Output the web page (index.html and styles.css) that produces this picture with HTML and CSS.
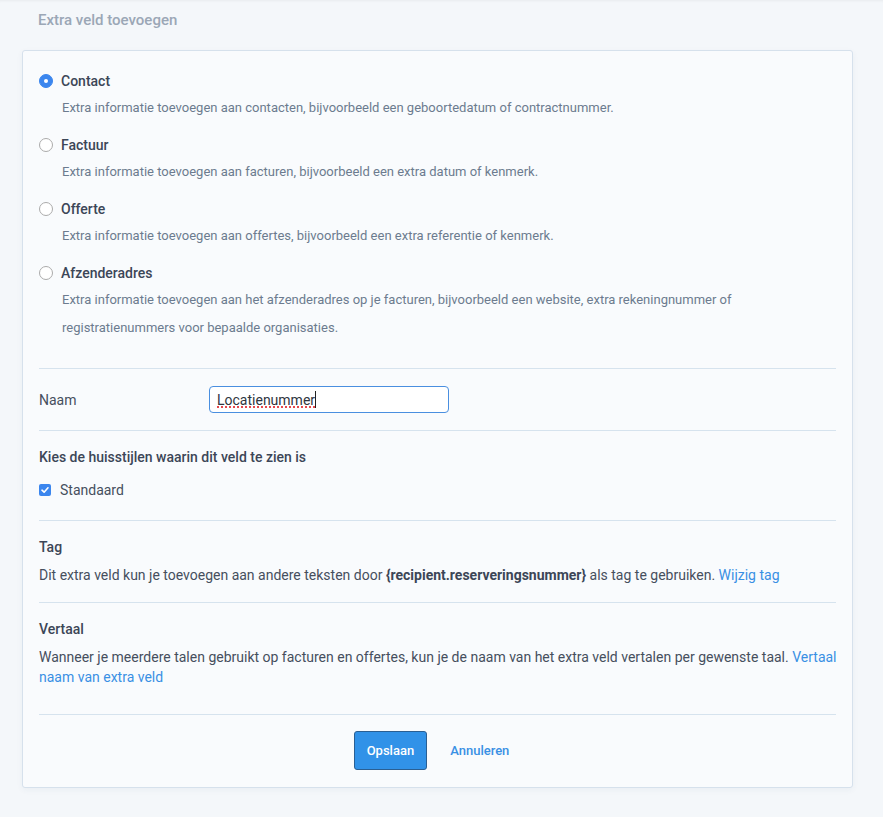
FILE: index.html
```html
<!DOCTYPE html>
<html lang="nl">

<head>
    <meta charset="UTF-8">
    <meta name="viewport" content="width=device-width, initial-scale=1.0">
    <title>Extra veld toevoegen</title>
    <link rel="stylesheet" href="styles.css">
</head>

<body>
    <div id="page">
        <h2 class="page-title">Extra veld toevoegen</h2>

        <div class="card">
            <div class="section types">
                <div class="type">
                    <label class="type-label"><span class="radio checked"></span>Contact</label>
                    <p class="type-desc">Extra informatie toevoegen aan contacten, bijvoorbeeld een geboortedatum of contractnummer.</p>
                </div>
                <div class="type">
                    <label class="type-label"><span class="radio"></span>Factuur</label>
                    <p class="type-desc">Extra informatie toevoegen aan facturen, bijvoorbeeld een extra datum of kenmerk.</p>
                </div>
                <div class="type">
                    <label class="type-label"><span class="radio"></span>Offerte</label>
                    <p class="type-desc">Extra informatie toevoegen aan offertes, bijvoorbeeld een extra referentie of kenmerk.</p>
                </div>
                <div class="type">
                    <label class="type-label"><span class="radio"></span>Afzenderadres</label>
                    <p class="type-desc">Extra informatie toevoegen aan het afzenderadres op je facturen, bijvoorbeeld een website, extra rekeningnummer of registratienummers voor bepaalde organisaties.</p>
                </div>
            </div>

            <div class="section name-row">
                <label class="name-label">Naam</label>
                <div class="text-input"><span class="misspelled">Locatienummer</span><span class="caret"></span></div>
            </div>

            <div class="section styles">
                <h3 class="section-title">Kies de huisstijlen waarin dit veld te zien is</h3>
                <label class="check-row">
                    <span class="checkbox">
                        <svg width="10" height="10" viewBox="0 0 10 10"><path d="M2 5.2 L4.1 7.2 L8 2.8" fill="none" stroke="#fff" stroke-width="1.6" stroke-linecap="round" stroke-linejoin="round"/></svg>
                    </span>
                    Standaard
                </label>
            </div>

            <div class="section tag">
                <h3 class="section-title">Tag</h3>
                <p class="section-text">Dit extra veld kun je toevoegen aan andere teksten door <strong>{recipient.reserveringsnummer}</strong> als tag te gebruiken. <a href="#">Wijzig tag</a></p>
            </div>

            <div class="section translate">
                <h3 class="section-title">Vertaal</h3>
                <p class="section-text">Wanneer je meerdere talen gebruikt op facturen en offertes, kun je de naam van het extra veld vertalen per gewenste taal. <a href="#">Vertaal naam van extra veld</a></p>
            </div>

            <div class="actions">
                <button class="btn-save">Opslaan</button>
                <a href="#" class="btn-cancel">Annuleren</a>
            </div>
        </div>
    </div>
</body>
</html>
```

FILE: styles.css
```css
body {
    margin: 0;
    background-color: #f4f7fa;
    font-family: Roboto, "Liberation Sans", Arial, sans-serif;
    color: #444f5f;
    box-shadow: inset 0 3px 3px -2px rgba(0, 0, 0, 0.05);
    min-height: 817px;
}

#page {
    padding: 0 30px 30px 22px;
}

.page-title {
    margin: 0;
    padding: 10px 16px 0;
    height: 50px;
    box-sizing: border-box;
    font-size: 15px;
    line-height: 20px;
    font-weight: 500;
    color: #9ba7b6;
}

.card {
    background: #f9fbfd;
    border: 1px solid #d6e1ec;
    border-radius: 3px;
    padding: 0 16px;
    box-shadow: 0 2px 6px rgba(40, 70, 110, 0.05);
}

.section {
    border-bottom: 1px solid #d6e3ee;
    padding: 16px 0 17px;
}

.types {
    padding-top: 17px;
    padding-bottom: 26px;
}

.type + .type {
    margin-top: 10px;
}

.type-label {
    display: flex;
    align-items: center;
    font-size: 14px;
    line-height: 26px;
    font-weight: 500;
    color: #3c4657;
}

.radio {
    width: 14px;
    height: 14px;
    box-sizing: border-box;
    border-radius: 50%;
    border: 1px solid #ababab;
    background: #fff;
    margin-right: 8px;
    position: relative;
}

.radio.checked {
    background: #3b86ee;
    border-color: #3b86ee;
}

.radio.checked::after {
    content: "";
    position: absolute;
    left: 4px;
    top: 4px;
    width: 4px;
    height: 4px;
    border-radius: 50%;
    background: #fff;
}

.type-desc {
    margin: 0;
    padding-left: 23px;
    font-size: 13px;
    line-height: 28px;
    color: #6c7b8f;
}

.name-row {
    display: flex;
    align-items: center;
    padding: 17px 0;
}

.name-label {
    width: 170px;
    font-size: 14px;
    color: #464f5d;
}

.text-input {
    width: 240px;
    height: 27px;
    box-sizing: border-box;
    border: 1px solid #4a8fe0;
    border-radius: 4px;
    background: #fff;
    padding: 0 7px;
    display: flex;
    align-items: center;
    font-size: 14px;
    color: #2f3540;
}

.misspelled {
    text-decoration: underline dotted #e5484d;
    text-decoration-thickness: 2px;
    text-underline-offset: 2px;
}

.caret {
    display: inline-block;
    width: 1px;
    height: 17px;
    background: #222;
}

.section-title {
    margin: 0;
    font-size: 14px;
    line-height: 20px;
    font-weight: 500;
    color: #3c4657;
}

.styles {
    padding-bottom: 20px;
}

.check-row {
    display: flex;
    align-items: center;
    margin-top: 13px;
    font-size: 14px;
    line-height: 20px;
    color: #464f5d;
}

.checkbox {
    width: 12px;
    height: 12px;
    border-radius: 2px;
    background: #3b86ee;
    display: flex;
    align-items: center;
    justify-content: center;
    margin-right: 9px;
}

.section-text {
    margin: 8px -3px 0 0;
    font-size: 14px;
    line-height: 20px;
    color: #464f5d;
}

.section-text strong {
    font-weight: 700;
    color: #3c4657;
}

.section-text a {
    color: #3990e4;
    text-decoration: none;
}

.translate {
    padding-bottom: 27px;
}

.actions {
    display: flex;
    justify-content: center;
    align-items: center;
    gap: 11px;
    padding: 16px 0 17px;
}

.btn-save {
    height: 39px;
    padding: 0 12px;
    background: #3192e8;
    color: #fff;
    border: 1px solid #2a5f93;
    border-radius: 3px;
    font-family: inherit;
    font-size: 13px;
    font-weight: 500;
    cursor: pointer;
}

.btn-cancel {
    padding: 0 12px;
    font-size: 13px;
    font-weight: 500;
    color: #3990e4;
    text-decoration: none;
}
```
